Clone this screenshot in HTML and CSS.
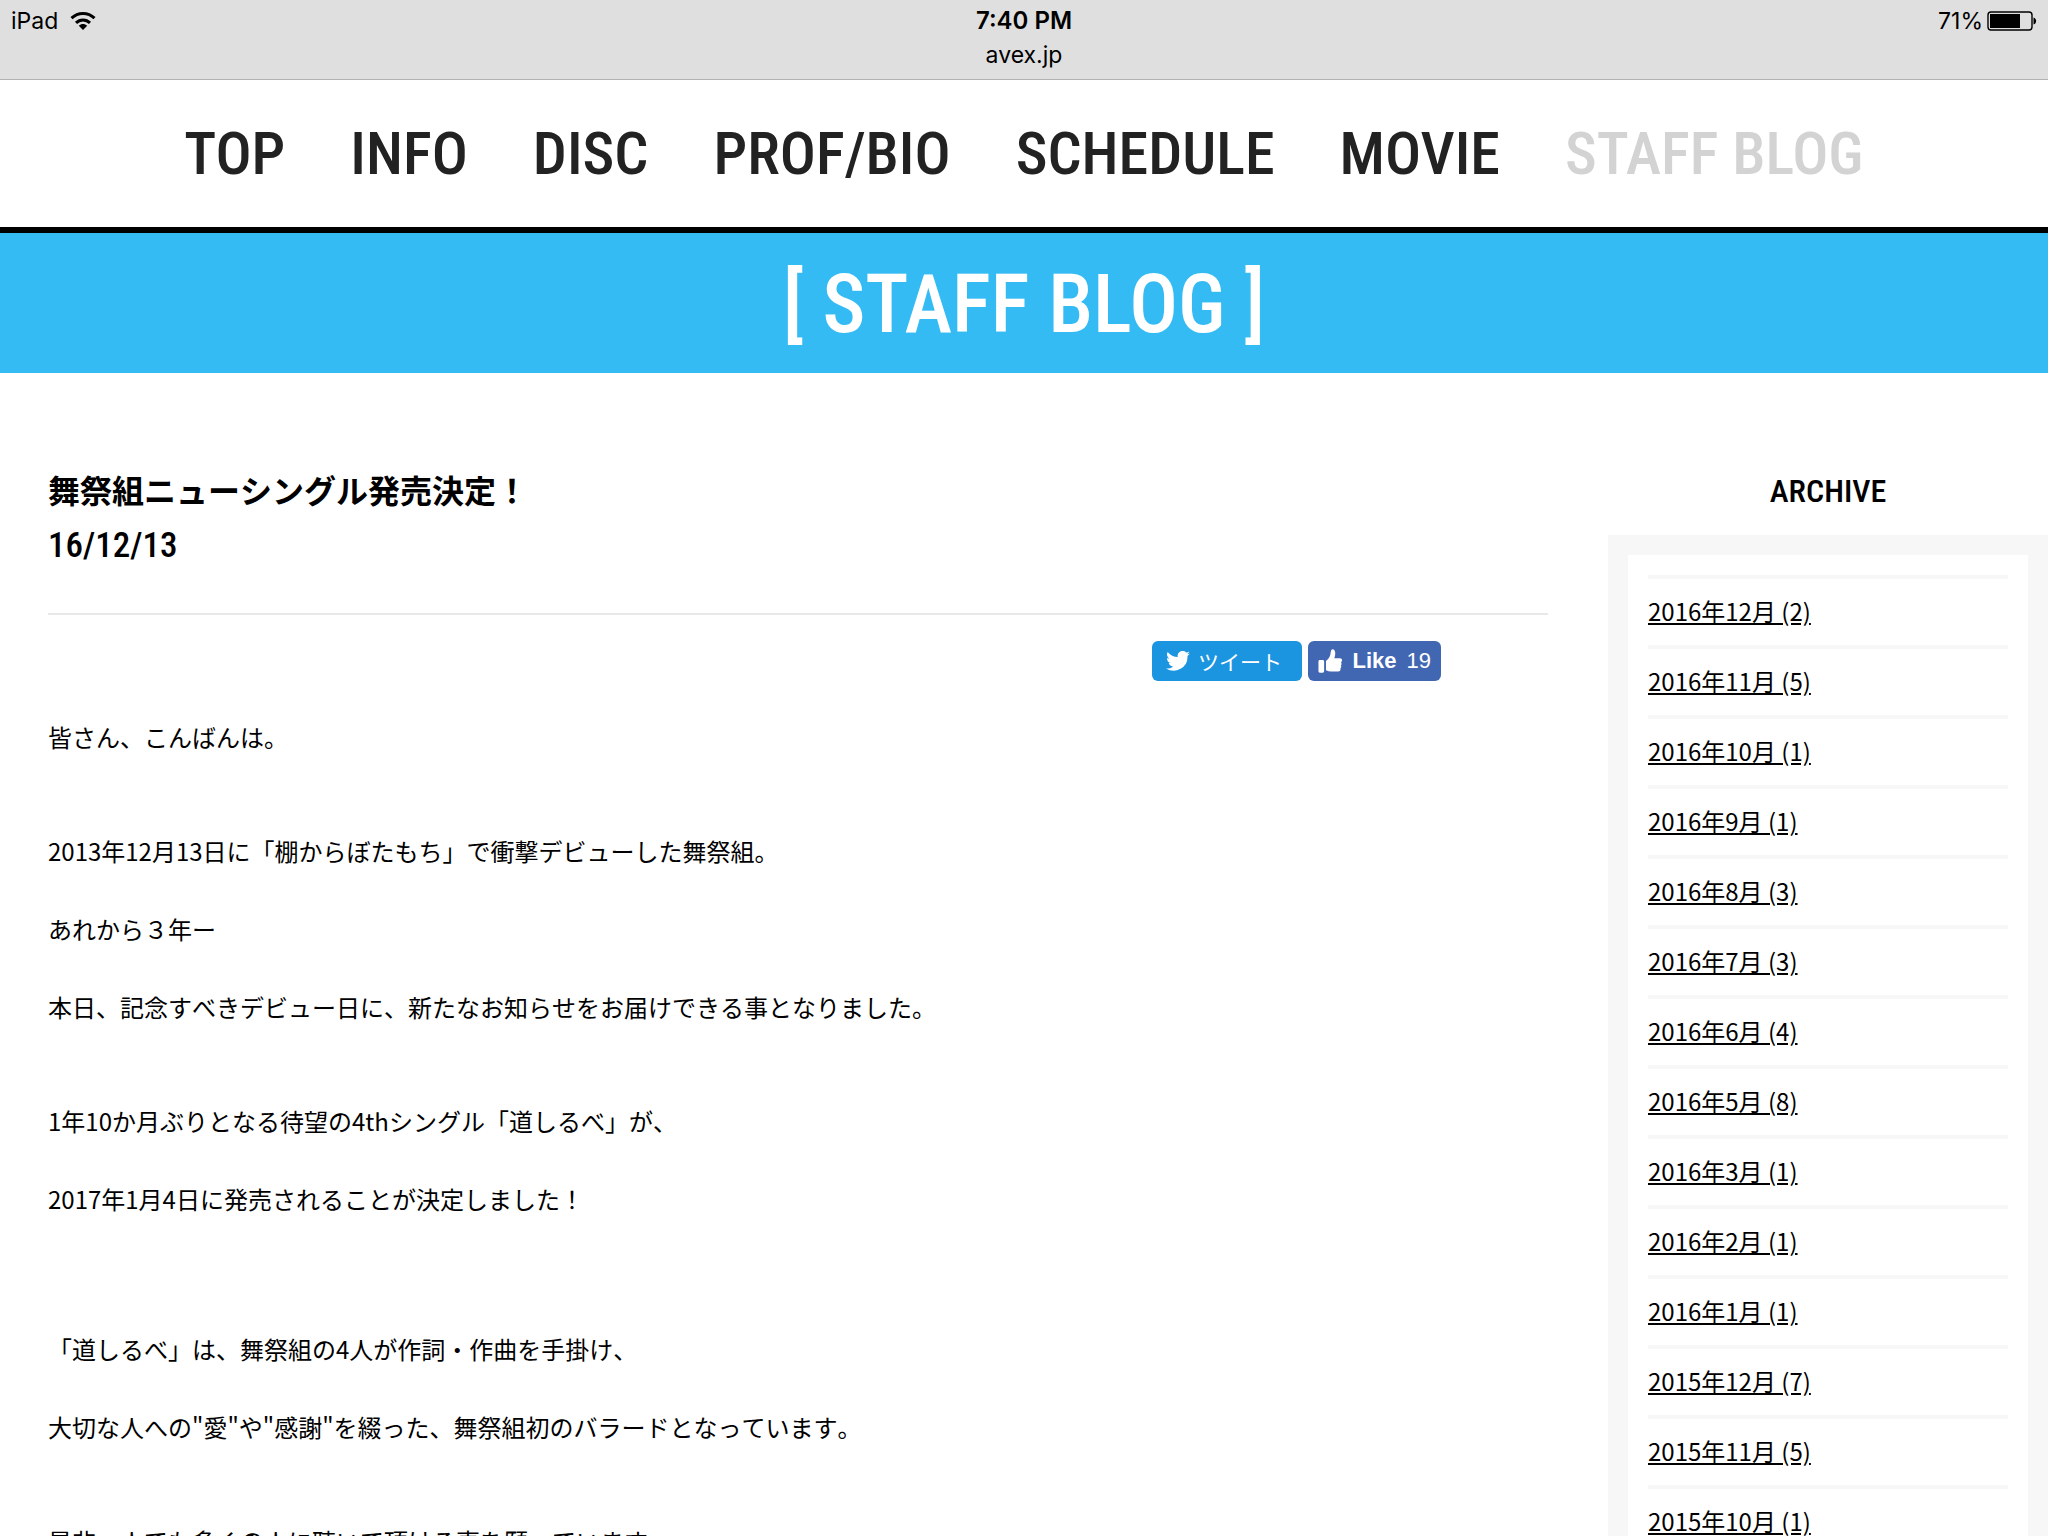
FILE: index.html
```
<!DOCTYPE html>
<html lang="ja">
<head>
<meta charset="utf-8">
<meta name="viewport" content="width=device-width, initial-scale=1">
<title>STAFF BLOG</title>
<link rel="stylesheet" href="styles.css">
</head>
<body>
<div class="status">
  <div class="status-left">
    <span>iPad</span>
    <svg class="wifi" viewBox="0 0 26 20" aria-hidden="true">
      <path d="M1.500 7.200C8 .9 18 .9 24.500 7.200M6 11.900C10 8 16 8 20 11.900" fill="none" stroke="#000" stroke-width="3"/>
      <path d="M8.800 14.800C11.400 12.400 14.600 12.400 17.200 14.800L13 19Z"/>
    </svg>
  </div>
  <div class="status-center">
    <span class="time">7:40 PM</span>
    <span>avex.jp</span>
  </div>
  <div class="status-right">
    <span>71%</span>
    <svg class="battery" viewBox="0 0 50 20" aria-hidden="true">
      <rect x="1" y="1" width="44" height="18" rx="3" fill="none" stroke="#000" stroke-width="1.4"/>
      <rect x="3" y="3" width="30" height="14"/>
      <path d="M46.500 6.500C50 7.500 50 12.500 46.500 13.500Z"/>
    </svg>
  </div>
</div>
<header>
  <nav class="nav">
    <a href="#">TOP</a>
    <a href="#">INFO</a>
    <a href="#">DISC</a>
    <a href="#">PROF/BIO</a>
    <a href="#">SCHEDULE</a>
    <a href="#">MOVIE</a>
    <a href="#" class="current" aria-current="page">STAFF BLOG</a>
  </nav>
</header>
<h1 class="banner">[ STAFF BLOG ]</h1>
<div class="columns">
  <main class="entry">
    <h2 class="entry-title">舞祭組ニューシングル発売決定！</h2>
    <time class="entry-date" datetime="2016-12-13">16/12/13</time>
    <div class="share">
      <button type="button" class="tweet">
        <svg class="bird" viewBox="0 0 24 20" aria-hidden="true"><path d="M24 2.400a9.800 9.800 0 0 1-2.800.8A4.900 4.900 0 0 0 23.300.4a9.900 9.900 0 0 1-3.100 1.200 4.900 4.900 0 0 0-8.400 4.500A14 14 0 0 1 1.700 1a4.900 4.900 0 0 0 1.500 6.600 4.900 4.900 0 0 1-2.200-.6 4.900 4.900 0 0 0 3.900 4.900 4.900 4.900 0 0 1-2.200.1 4.900 4.900 0 0 0 4.600 3.400A9.900 9.900 0 0 1 0 17.500 14 14 0 0 0 21.500 5z"/></svg>
        <span>ツイート</span>
      </button>
      <button type="button" class="like">
        <svg class="thumb" viewBox="0 0 26 26" aria-hidden="true"><path d="M2 12H5Q6.500 12 6.500 13.500V24Q6.500 25.500 5 25.500H2Q.5 25.500.5 24V13.500Q.5 12 2 12ZM8.500 13Q13.300 9.500 13.500 3.500Q13.700.5 15.500.5Q18.500.8 18.300 5.500Q18.200 7.800 17.300 10H23.500Q25.800 10.300 25.500 12.500Q25.300 13.800 24.500 14.200Q25.600 16.500 24.300 17.600Q25.300 19.800 23.800 20.800Q24.500 24 21.500 24.200H14Q11 24.200 8.500 22.800Z"/></svg>
        <b>Like</b>
        <span>19</span>
      </button>
    </div>
    <div class="entry-body">
      <p>皆さん、こんばんは。</p>
      <p class="section">2013年12月13日に「棚からぼたもち」で衝撃デビューした舞祭組。</p>
      <p>あれから３年ー</p>
      <p>本日、記念すべきデビュー日に、新たなお知らせをお届けできる事となりました。</p>
      <p class="section">1年10か月ぶりとなる待望の4thシングル「道しるべ」が、</p>
      <p>2017年1月4日に発売されることが決定しました！</p>
      <p class="chapter">「道しるべ」は、舞祭組の4人が作詞・作曲を手掛け、</p>
      <p>大切な人への"愛"や"感謝"を綴った、舞祭組初のバラードとなっています。</p>
      <p class="section">是非一人でも多くの人に聴いて頂ける事を願っています。</p>
    </div>
  </main>
  <aside class="archive">
    <h2 class="archive-title">ARCHIVE</h2>
    <div class="archive-box">
      <ul>
        <li><a href="#">2016年12月 (2)</a></li>
        <li><a href="#">2016年11月 (5)</a></li>
        <li><a href="#">2016年10月 (1)</a></li>
        <li><a href="#">2016年9月 (1)</a></li>
        <li><a href="#">2016年8月 (3)</a></li>
        <li><a href="#">2016年7月 (3)</a></li>
        <li><a href="#">2016年6月 (4)</a></li>
        <li><a href="#">2016年5月 (8)</a></li>
        <li><a href="#">2016年3月 (1)</a></li>
        <li><a href="#">2016年2月 (1)</a></li>
        <li><a href="#">2016年1月 (1)</a></li>
        <li><a href="#">2015年12月 (7)</a></li>
        <li><a href="#">2015年11月 (5)</a></li>
        <li><a href="#">2015年10月 (1)</a></li>
      </ul>
    </div>
  </aside>
</div>
</body>
</html>
```
FILE: styles.css
```
* { box-sizing: border-box; }
body {
  display: flex;
  flex-direction: column;
  height: 100vh;
  margin: 0;
  overflow: hidden;
  background: #fff;
  color: #000;
  font: 24px/36px "Noto Sans CJK JP", sans-serif;
}
h1, h2, p, ul { margin: 0; padding: 0; }

/* Device status bar */
.status {
  display: grid;
  grid-template-columns: 1fr auto 1fr;
  flex: none;
  height: 80px;
  padding: 4px 11px 0;
  border-bottom: 1px solid #b2b2b2;
  background: #dfdfdf;
  font: 23px/34px Inter, sans-serif;
}
.status-left, .status-right { display: flex; align-items: center; height: 34px; }
.status-left { gap: 12px; }
.status-right { gap: 4px; justify-content: flex-end; }
.status-center { display: flex; flex-direction: column; align-items: center; }
.time { font-size: 24px; font-weight: 600; }
.wifi { width: 26px; height: 20px; }
.battery { width: 50px; height: 20px; }

/* Site navigation */
.nav {
  display: flex;
  justify-content: space-between;
  align-items: center;
  height: 153px;
  padding: 0 9%;
  border-bottom: 6px solid #000;
  font: 500 60px/80px "Roboto Condensed", "Open Sans Condensed", sans-serif;
}
.nav a { color: #222; text-decoration: none; }
.nav .current { color: #d3d3d3; }
.banner {
  flex: none;
  padding: 22px 0 18px;
  background: #35bbf4;
  color: #fff;
  text-align: center;
  font: 500 81px/100px "Roboto Condensed", "Open Sans Condensed", sans-serif;
}

/* Page columns */
.columns {
  display: grid;
  grid-template-columns: minmax(0, 1fr) 440px;
  gap: 60px;
  flex: 1;
  min-height: 0;
  padding: 92px 0 0 48px;
}
.entry { font-kerning: none; }
.entry-title { font-size: 32px; line-height: 48px; font-weight: 700; }
.entry-date {
  display: block;
  padding-bottom: 34px;
  border-bottom: 2px solid #e8e8e8;
  font: 500 35px/66px "Roboto Condensed", sans-serif;
}
.share { display: flex; justify-content: flex-end; gap: 6px; padding: 26px 107px 0 0; }
.share button {
  display: flex;
  align-items: center;
  height: 40px;
  border: 0;
  border-radius: 6px;
  color: #fff;
  font: 22px/40px "Liberation Sans", "Noto Sans CJK JP", sans-serif;
}
.share svg { fill: #fff; }
.share .tweet { width: 150px; padding: 0 14px; gap: 8px; background: #1b95e0; font: 400 21px/36px "Noto Sans CJK JP", sans-serif; }
.share .like { width: 133px; padding: 0 10px; gap: 10px; background: #4267b2; }
.bird { width: 24px; height: 20px; }
.thumb { width: 26px; height: 26px; }
.entry-body { display: flex; flex-direction: column; gap: 42px; padding-top: 38px; }
.section { padding-top: 36px; }
.chapter { padding-top: 72px; }

/* Monthly archive */
.archive-title {
  text-align: center;
  font: 500 32px/52px "Roboto Condensed", sans-serif;
}
.archive-box { margin-top: 18px; padding: 20px; background: #f7f7f7; }
.archive-box ul {
  padding: 20px;
  background: #fff;
  list-style: none;
}
.archive-box li { padding: 14px 0 16px; border-bottom: 4px solid #f7f7f7; }
.archive-box li:first-child { border-top: 4px solid #f7f7f7; }
.archive-box a { display: block; color: #000; }
```
